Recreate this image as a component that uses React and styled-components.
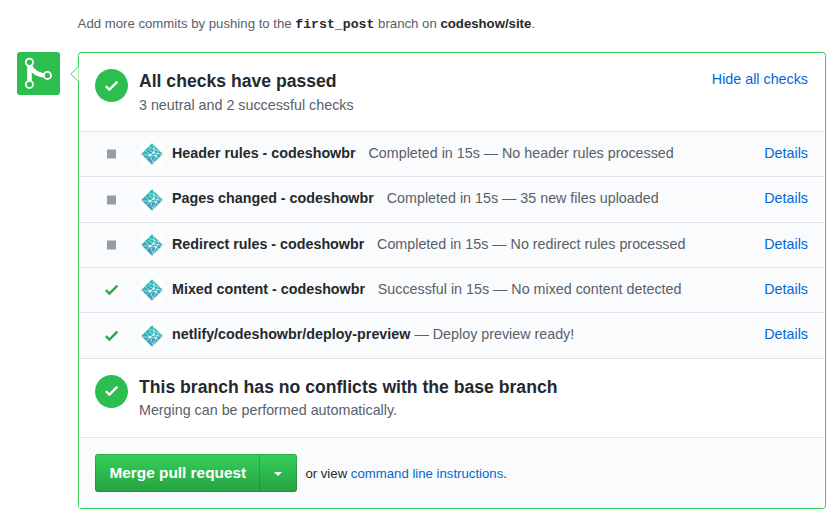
import React from "react";
import styled, { createGlobalStyle } from "styled-components";

const GlobalStyle = createGlobalStyle`
  * { box-sizing: border-box; }
  body {
    margin: 0;
    background: #fff;
    color: #24292e;
    font-family: "Liberation Sans", Arial, sans-serif;
    font-size: 14.3px;
  }
  svg { display: block; }
`;

const Page = styled.main`
  width: 837px;
  height: 524px;
  padding: 14px 11px 0 17px;
  overflow: hidden;
`;

const Hint = styled.p`
  margin: 0 0 18px 60.6px;
  height: 20px;
  line-height: 20px;
  font-size: 13.2px;
  color: #586069;
  white-space: nowrap;
`;

const BranchName = styled.code`
  font: bold 13.2px "Liberation Mono", monospace;
  color: #24292e;
`;

const RepoName = styled.strong`
  color: #24292e;
`;

const MergeArea = styled.section`
  display: flex;
  align-items: flex-start;
  gap: 18px;
`;

const MergeAvatar = styled.div`
  flex: none;
  width: 43px;
  height: 43px;
  border-radius: 3px;
  background: #2cbe4e;
`;

const Panel = styled.div`
  position: relative;
  flex: 1;
  height: 457px;
  border: 1px solid #34d058;
  border-radius: 3.3px;
`;

const Caret = styled.svg`
  position: absolute;
  left: -9px;
  top: 12px;
`;

const Summary = styled.div`
  display: flex;
  align-items: flex-start;
  height: ${(p) => p.$height}px;
  padding: 16px 17px 0 16px;
`;

const StatusCircle = styled.div`
  display: flex;
  flex: none;
  align-items: center;
  justify-content: center;
  width: 33px;
  height: 33px;
  margin-right: 11px;
  border-radius: 50%;
  background: #2cbe4e;
  color: #fff;
`;

const SummaryText = styled.div`
  flex: 1;
`;

const Heading = styled.h3`
  margin: 0;
  font-size: 17.6px;
  line-height: 25px;
`;

const Description = styled.p`
  margin: 0;
  line-height: ${(p) => p.$leading}px;
  color: #586069;
`;

const Link = styled.a`
  color: #0366d6;
  line-height: 21px;
  white-space: nowrap;
`;

const CheckList = styled.div`
  margin-right: 1px;
  background: #fafbfc;
  border-bottom: 1px solid #e1e4e8;
`;

const CheckRow = styled.div`
  display: flex;
  align-items: center;
  height: 45.32px;
  padding: 0 16px 0 16px;
  border-top: 1px solid #e1e4e8;
  white-space: nowrap;
`;

const StatusIcon = styled.div`
  display: flex;
  justify-content: center;
  width: 33px;
  margin-right: 13px;
  color: ${(p) => (p.$success ? "#28a745" : "#959da5")};
`;

const AppAvatar = styled.div`
  width: 22px;
  height: 22px;
  margin-top: 0.3px;
  margin-right: 9px;
  border-radius: 3px;
  background: #fff;
`;

const CheckText = styled.div`
  flex: 1;
  padding-bottom: 1.7px;
  line-height: 21px;
  color: #586069;
`;

const CheckName = styled.strong`
  margin-right: ${(p) => p.$gap}px;
  color: #24292e;
`;

const DetailsLink = styled(Link)`
  padding-bottom: 1.7px;
`;

const Actions = styled.div`
  display: flex;
  align-items: center;
  height: 71px;
  margin-right: 1px;
  padding: 1px 16px 0;
  gap: 8.4px;
  border-top: 1px solid #e1e4e8;
  background: #fafbfc;
  font-size: 13.2px;
`;

const ButtonGroup = styled.div`
  display: flex;
  width: 202px;
  height: 38px;
`;

const MergeButton = styled.button`
  display: flex;
  align-items: center;
  justify-content: center;
  width: ${(p) => p.$width}px;
  padding: 0;
  border: 1px solid rgba(27, 31, 35, 0.2);
  border-left-width: ${(p) => (p.$last ? 0 : 1)}px;
  border-radius: ${(p) => (p.$last ? "0 3.3px 3.3px 0" : "3.3px 0 0 3.3px")};
  background: linear-gradient(#34d058, #28a745 90%) border-box;
  color: #fff;
  font: bold 15.4px "Liberation Sans", Arial, sans-serif;
`;

const MergeLabel = styled.span`
  padding-left: 0.6px;
`;

const DownTriangle = styled.span`
  margin-top: 1px;
  border: 4.4px solid transparent;
  border-top-color: #fff;
  border-bottom: 0;
`;

const CheckIcon = () => (
  <svg width="13.2" height="17.6" viewBox="0 0 12 16" fill="currentColor">
    <path d="M12 5l-8 8-4-4 1.5-1.5L4 10l6.5-6.5L12 5z" />
  </svg>
);

const SquareIcon = () => (
  <svg width="9" height="18" viewBox="0 0 9 18" fill="currentColor">
    <path d="M0 4.5h9v9H0z" />
  </svg>
);

const MergeIcon = () => (
  <svg width="43" height="43" viewBox="0 0 43 43">
    <g fill="none" stroke="#fff">
      <path d="M12.5 10v22.4" strokeWidth="4.6" />
      <path d="M12.3 12.5c2.6 6.6 8 11 18 11" strokeWidth="4.6" />
    </g>
    <g fill="#2cbe4e" stroke="#fff" strokeWidth="1.8">
      <circle cx="12.4" cy="10.2" r="3.6" />
      <circle cx="12.4" cy="32.4" r="3.6" />
      <circle cx="30.4" cy="23.4" r="3.6" />
    </g>
  </svg>
);

const NetlifyIcon = ({ id }) => (
  <svg width="22" height="22" viewBox="0 0 22 22">
    <defs>
      <linearGradient id={id} x1="0" y1="0" x2="0" y2="1">
        <stop offset="0" stopColor="#20c3b5" />
        <stop offset="1" stopColor="#4799bd" />
      </linearGradient>
    </defs>
    <path d="M11 .2L21.8 11 11 21.8.2 11z" fill={`url(#${id})`} />
    <g stroke="#fff" strokeWidth=".6" fill="none">
      <path d="M7.2 3.8L17.8 8.2M12.4 1.6L13.4 6.2 12.4 9.8 7.2 6.2M3.9 7.2L9 12.1M12.4 9.8L21.5 11.6M.7 11.9L9 12.1 15.2 13.2M9 12.1L5.2 16M9 12.1L12.4 20.5M15.2 13.2L12.4 20.5M12.4 9.8L15.2 13.2 17.7 15.3M17.8 8.2L15.2 13.2" />
      <path d="M12.4 9.8L9 12.1" strokeWidth="1" />
    </g>
    <g fill="#fff">
      <circle cx="8.8" cy="12.1" r="1" />
      <circle cx="12.8" cy="9.2" r=".9" />
      <circle cx="15.2" cy="13.2" r=".7" />
    </g>
  </svg>
);

const checks = [
  { name: "Header rules - codeshowbr", text: "Completed in 15s — No header rules processed", gap: 13 },
  { name: "Pages changed - codeshowbr", text: "Completed in 15s — 35 new files uploaded", gap: 13 },
  { name: "Redirect rules - codeshowbr", text: "Completed in 15s — No redirect rules processed", gap: 12.8 },
  { name: "Mixed content - codeshowbr", text: "Successful in 15s — No mixed content detected", gap: 12.8, success: true },
  { name: "netlify/codeshowbr/deploy-preview", text: "— Deploy preview ready!", gap: 4.2, success: true },
];

export default function App() {
  return (
    <Page>
      <GlobalStyle />
      <Hint>
        Add more commits by pushing to the <BranchName>first_post</BranchName> branch on{" "}
        <RepoName>codeshow/site</RepoName>.
      </Hint>
      <MergeArea>
        <MergeAvatar>
          <MergeIcon />
        </MergeAvatar>
        <Panel>
          <Caret width="10" height="18" viewBox="0 0 10 18">
            <path d="M9 .5v17h1V.5z" fill="#fff" />
            <path d="M8.6 1.2L.8 9l7.8 7.8" fill="#fff" stroke="#34d058" strokeWidth=".9" />
          </Caret>
          <Summary $height={78.15}>
            <StatusCircle>
              <CheckIcon />
            </StatusCircle>
            <SummaryText>
              <Heading>All checks have passed</Heading>
              <Description $leading={22}>3 neutral and 2 successful checks</Description>
            </SummaryText>
            <Link>Hide all checks</Link>
          </Summary>
          <CheckList>
            {checks.map((check, index) => (
              <CheckRow key={check.name}>
                <StatusIcon $success={check.success}>
                  {check.success ? <CheckIcon /> : <SquareIcon />}
                </StatusIcon>
                <AppAvatar>
                  <NetlifyIcon id={`netlify-${index}`} />
                </AppAvatar>
                <CheckText>
                  <CheckName $gap={check.gap}>{check.name}</CheckName>
                  {check.text}
                </CheckText>
                <DetailsLink>Details</DetailsLink>
              </CheckRow>
            ))}
          </CheckList>
          <Summary $height={78.25}>
            <StatusCircle>
              <CheckIcon />
            </StatusCircle>
            <SummaryText>
              <Heading>This branch has no conflicts with the base branch</Heading>
              <Description $leading={21.4}>Merging can be performed automatically.</Description>
            </SummaryText>
          </Summary>
          <Actions>
            <ButtonGroup>
              <MergeButton $width={165}>
                <MergeLabel>Merge pull request</MergeLabel>
              </MergeButton>
              <MergeButton $width={37} $last aria-label="Select merge method">
                <DownTriangle />
              </MergeButton>
            </ButtonGroup>
            <span>
              or view <Link>command line instructions</Link>.
            </span>
          </Actions>
        </Panel>
      </MergeArea>
    </Page>
  );
}
